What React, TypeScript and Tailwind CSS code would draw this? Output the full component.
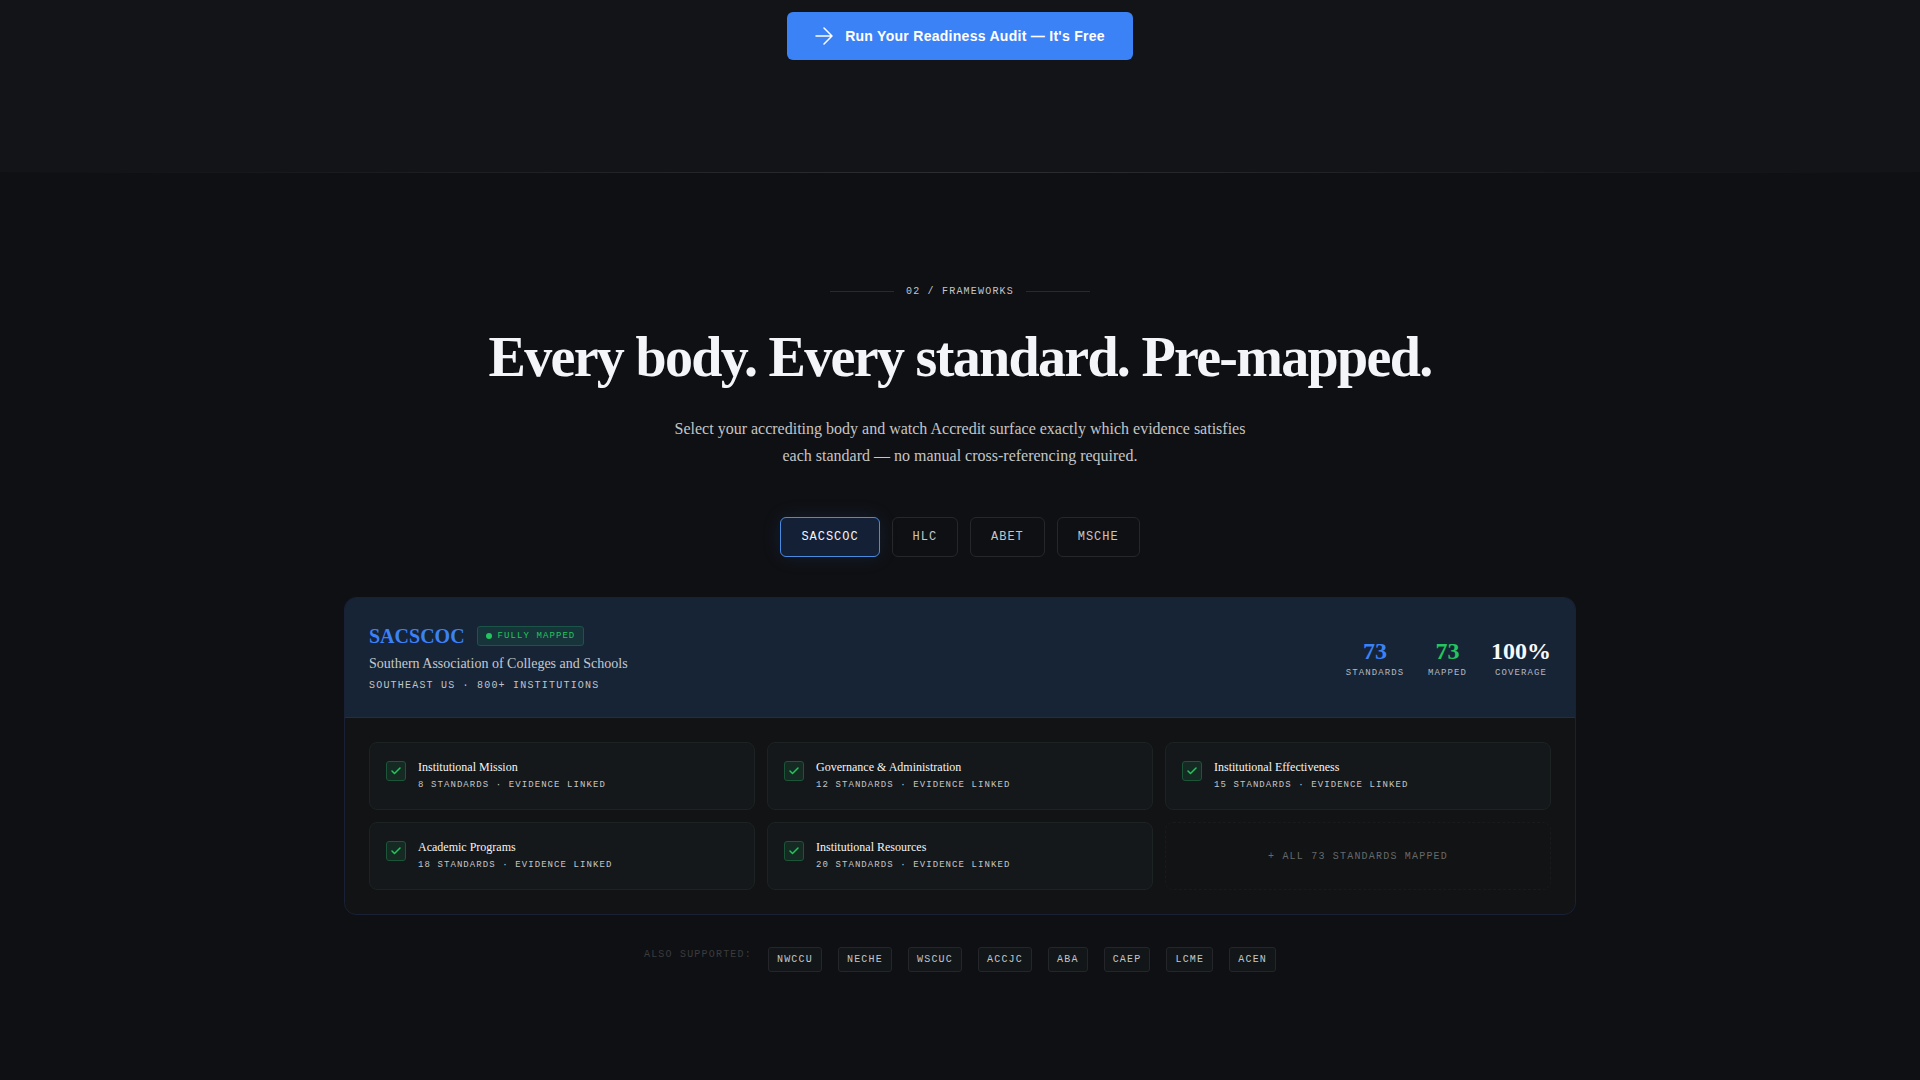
import { useState } from "react";
import { Check } from "lucide-react";

const bodies = ["SACSCOC", "HLC", "ABET", "MSCHE"];

const standards = [
  { name: "Institutional Mission", count: 8 },
  { name: "Governance & Administration", count: 12 },
  { name: "Institutional Effectiveness", count: 15 },
  { name: "Academic Programs", count: 18 },
  { name: "Institutional Resources", count: 20 },
];

const stats = [
  { value: "73", label: "Standards", color: "text-[#3b82f6]" },
  { value: "73", label: "Mapped", color: "text-[#22c55e]" },
  { value: "100%", label: "Coverage", color: "text-[#f8f9fb]" },
];

const alsoSupported = ["NWCCU", "NECHE", "WSCUC", "ACCJC", "ABA", "CAEP", "LCME", "ACEN"];

const mono = "font-['Liberation_Mono',monospace] uppercase";

const ArrowIcon = () => (
  <svg className="size-[18px]" viewBox="0 0 18 18" fill="none" stroke="currentColor" strokeWidth="1.5">
    <path d="M1 9h16M9 1l8 8-8 8" strokeLinecap="round" strokeLinejoin="round" />
  </svg>
);

const App: React.FC = () => {
  const [active, setActive] = useState("SACSCOC");

  return (
    <div className="min-h-screen bg-[#0f1013] font-['Liberation_Serif',serif] text-[#f4f5f8]">
      <section className="flex justify-center bg-[#131417] pt-3 pb-28">
        <button className="flex h-12 items-center gap-3 rounded-md bg-[#3b82f6] px-7 font-['Liberation_Sans',sans-serif] text-sm font-bold tracking-[0.02em] text-white">
          <ArrowIcon />
          Run Your Readiness Audit — It's Free
        </button>
      </section>

      <div className="h-px bg-linear-to-r from-transparent via-[#2c2e32] to-transparent" />

      <section className="mx-auto flex max-w-[1280px] flex-col items-center px-6 pt-[111px] pb-[108px]">
        <div className="mb-6 flex items-center gap-3">
          <span className="h-px w-16 bg-[#282a2d]" />
          <span className={`${mono} text-[10px] leading-[15px] tracking-[0.12em] text-[#c4c6c8]`}>02 / Frameworks</span>
          <span className="h-px w-16 bg-[#282a2d]" />
        </div>

        <h2 className="mb-6 text-center text-[56px] leading-[68px] font-bold tracking-[-0.03em]">
          Every body. Every standard. Pre-mapped.
        </h2>

        <p className="mb-12 max-w-[576px] text-center text-base leading-[27px] text-[#c4c6c8]">
          Select your accrediting body and watch Accredit surface exactly which evidence satisfies each standard — no
          manual cross-referencing required.
        </p>

        <div className="mb-10 flex gap-3">
          {bodies.map((body) => (
            <button
              key={body}
              onClick={() => setActive(body)}
              className={`${mono} rounded-md border px-5 py-2.5 text-xs leading-[18px] tracking-[0.08em] ${
                active === body
                  ? "border-[#4a8ae0] bg-[#142036] text-[#f4f5f8] shadow-[0_0_20px_rgba(59,130,246,0.12)]"
                  : "border-[#252729] text-[#c4c6c8]"
              }`}
            >
              {body}
            </button>
          ))}
        </div>

        <div className="w-full overflow-hidden rounded-xl border border-[#1a2036] bg-[#111314]">
          <div className="flex items-center justify-between border-b border-[#1b2f50] bg-[#172436] p-6">
            <div>
              <div className="flex items-center gap-3">
                <h3 className="text-xl leading-7 font-bold text-[#3b82f6]">SACSCOC</h3>
                <span
                  className={`${mono} flex items-center gap-1.5 rounded-[3px] border border-[#1a5548] bg-[#17343b] px-2 py-0.5 text-[9px] leading-[14px] tracking-[0.12em] text-[#22c55e]`}
                >
                  <span className="size-1.5 rounded-full bg-[#22c55e]" />
                  Fully mapped
                </span>
              </div>
              <p className="mt-[3px] text-sm leading-[21px] text-[#c5c9cf]">
                Southern Association of Colleges and Schools
              </p>
              <p className={`${mono} mt-1 text-[10px] leading-[15px] tracking-[0.12em] text-[#c0c5cb]`}>
                Southeast US · 800+ institutions
              </p>
            </div>
            <div className="flex gap-6">
              {stats.map((stat) => (
                <div key={stat.label} className="text-center">
                  <p className={`text-2xl leading-[30px] font-bold ${stat.color}`}>{stat.value}</p>
                  <p className={`${mono} text-[9px] leading-[14px] tracking-[0.12em] text-[#b4b9c0]`}>{stat.label}</p>
                </div>
              ))}
            </div>
          </div>

          <div className="grid grid-cols-3 gap-3 p-6">
            {standards.map((item) => (
              <div key={item.name} className="flex items-start gap-3 rounded-lg border border-[#1d2223] bg-[#14181a] p-4">
                <span className="mt-0.5 flex size-5 items-center justify-center rounded-[3px] border border-[#1b5638] bg-[#152a22] text-[#22c55e]">
                  <Check size={12} strokeWidth={3} />
                </span>
                <div>
                  <p className="text-xs leading-4">{item.name}</p>
                  <p className={`${mono} mt-0.5 text-[9px] leading-4 tracking-[0.12em] text-[#c4c6c8]`}>
                    {item.count} standards · evidence linked
                  </p>
                </div>
              </div>
            ))}
            <div
              className={`${mono} flex items-center justify-center rounded-lg border border-dashed border-[#181b1c] text-[10px] leading-[15px] tracking-[0.12em] text-[#67696b]`}
            >
              + All 73 standards mapped
            </div>
          </div>
        </div>

        <div className={`${mono} mt-8 flex flex-wrap justify-center gap-4 text-[10px] leading-[15px] tracking-[0.12em]`}>
          <span className="text-[#3a3c3f]">Also supported:</span>
          {alsoSupported.map((name) => (
            <span key={name} className="rounded-[3px] border border-[#242629] bg-[#131618] px-2 py-1 text-[#c4c6c8]">
              {name}
            </span>
          ))}
        </div>
      </section>
    </div>
  );
};

export default App;
